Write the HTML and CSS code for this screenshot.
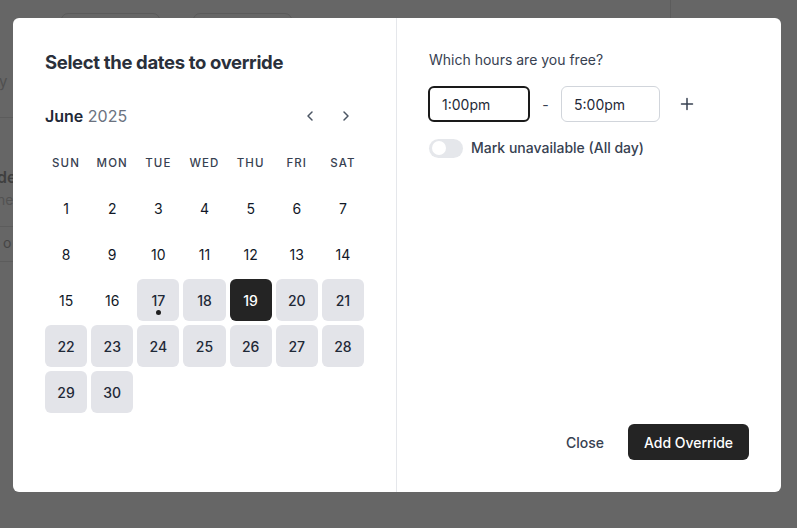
FILE: index.html
```html
<!DOCTYPE html>
<html lang="en">
<head>
<meta charset="utf-8">
<title>Date overrides</title>
<link rel="stylesheet" href="styles.css">
</head>
<body>
<div class="backdrop">
  <div class="bg-box bg-box-a"></div>
  <div class="bg-box bg-box-b"></div>
  <div class="bg-vline"></div>
  <div class="bg-text bg-y">y</div>
  <div class="bg-hline bg-l1"></div>
  <div class="bg-text bg-de">de</div>
  <div class="bg-text bg-ne">ne</div>
  <div class="bg-hline bg-l2"></div>
  <div class="bg-text bg-o">o</div>
  <div class="bg-hline bg-l3"></div>
</div>

<div class="modal">
  <section class="left">
    <h2 class="title">Select the dates to override</h2>
    <div class="month-row">
      <div class="month"><b>June</b> <span class="year">2025</span></div>
      <div class="nav">
        <button class="nav-btn" aria-label="Previous month">
          <svg width="16" height="16" viewBox="0 0 16 16"><path d="M10 4 L6 8 L10 12" fill="none" stroke="#4b5563" stroke-width="1.5" stroke-linecap="round" stroke-linejoin="round"/></svg>
        </button>
        <button class="nav-btn" aria-label="Next month">
          <svg width="16" height="16" viewBox="0 0 16 16"><path d="M6 4 L10 8 L6 12" fill="none" stroke="#4b5563" stroke-width="1.5" stroke-linecap="round" stroke-linejoin="round"/></svg>
        </button>
      </div>
    </div>
    <div class="weekdays">
      <span>SUN</span><span>MON</span><span>TUE</span><span>WED</span><span>THU</span><span>FRI</span><span>SAT</span>
    </div>
    <div class="days">
      <span class="day">1</span><span class="day">2</span><span class="day">3</span><span class="day">4</span><span class="day">5</span><span class="day">6</span><span class="day">7</span>
      <span class="day">8</span><span class="day">9</span><span class="day">10</span><span class="day">11</span><span class="day">12</span><span class="day">13</span><span class="day">14</span>
      <span class="day">15</span><span class="day">16</span><span class="day avail today">17<i class="dot"></i></span><span class="day avail">18</span><span class="day selected">19</span><span class="day avail">20</span><span class="day avail">21</span>
      <span class="day avail">22</span><span class="day avail">23</span><span class="day avail">24</span><span class="day avail">25</span><span class="day avail">26</span><span class="day avail">27</span><span class="day avail">28</span>
      <span class="day avail">29</span><span class="day avail">30</span>
    </div>
  </section>

  <section class="right">
    <div class="question">Which hours are you free?</div>
    <div class="time-row">
      <div class="time-input focused">1:00pm</div>
      <span class="dash">-</span>
      <div class="time-input">5:00pm</div>
      <button class="plus" aria-label="Add time">
        <svg width="14" height="14" viewBox="0 0 14 14"><path d="M7 1.5 V12.5 M1.5 7 H12.5" stroke="#374151" stroke-width="1.5" stroke-linecap="round"/></svg>
      </button>
    </div>
    <div class="toggle-row">
      <span class="toggle"><span class="knob"></span></span>
      <span class="toggle-label">Mark unavailable (All day)</span>
    </div>
    <div class="footer">
      <button class="btn-close">Close</button>
      <button class="btn-primary">Add Override</button>
    </div>
  </section>
</div>
</body>
</html>
```

FILE: styles.css
```css
* { box-sizing: border-box; }
html, body { margin: 0; padding: 0; }
body {
  width: 797px;
  height: 528px;
  overflow: hidden;
  background: #666666;
  font-family: Inter, "Noto Sans", "Liberation Sans", sans-serif;
  color: #111827;
  position: relative;
}
button { font-family: inherit; border: none; background: none; padding: 0; cursor: pointer; }

.backdrop { position: absolute; inset: 0; overflow: hidden; }
.bg-box { position: absolute; top: 13px; width: 99px; height: 30px; border: 1px solid #5a5a5a; border-radius: 7px; }
.bg-box-a { left: 61px; }
.bg-box-b { left: 193px; }
.bg-vline { position: absolute; left: 670px; top: 0; width: 1px; height: 20px; background: #5c5c5c; }
.bg-hline { position: absolute; left: 0; width: 14px; height: 1px; background: #5c5c5c; }
.bg-l1 { top: 117px; }
.bg-l2 { top: 226px; }
.bg-l3 { top: 261px; }
.bg-text { position: absolute; font-size: 16px; color: #4a4a4a; line-height: 20px; }
.bg-y { left: -1px; top: 72px; color: #505050; font-size: 15px; }
.bg-de { left: -3px; top: 167px; font-weight: 600; color: #3f3f3f; }
.bg-ne { left: -3px; top: 190px; font-size: 14px; color: #525252; }
.bg-o { left: 3px; top: 233px; font-size: 14px; color: #454545; }

.modal {
  position: absolute;
  left: 13px;
  top: 18px;
  width: 768px;
  height: 474px;
  background: #ffffff;
  border-radius: 6px;
  display: flex;
}

.left {
  width: 384px;
  padding: 32px 32px 0 32px;
  border-right: 1px solid #e5e7eb;
}
.title {
  margin: 0;
  font-size: 18.5px;
  line-height: 24px;
  font-weight: 700;
  letter-spacing: -0.35px;
  color: #2a303b;
}
.month-row {
  margin-top: 30px;
  width: 319px;
  height: 24px;
  display: flex;
  align-items: center;
  justify-content: space-between;
}
.month { font-size: 16px; line-height: 24px; color: #1f2937; }
.month b { font-weight: 600; }
.year { color: #6b7280; font-weight: 400; }
.nav { display: flex; }
.nav-btn { width: 36px; height: 24px; display: flex; align-items: center; justify-content: center; }

.weekdays {
  margin-top: 27px;
  width: 319px;
  display: grid;
  grid-template-columns: repeat(7, 1fr);
  column-gap: 4px;
  font-size: 11.5px;
  line-height: 16px;
  font-weight: 500;
  letter-spacing: 1.1px;
  color: #374151;
  text-align: center;
}
.days {
  margin-top: 16px;
  width: 319px;
  display: grid;
  grid-template-columns: repeat(7, 1fr);
  grid-auto-rows: 42px;
  gap: 4px;
}
.day {
  position: relative;
  display: flex;
  align-items: center;
  justify-content: center;
  font-size: 14px;
  color: #111827;
  border-radius: 6px;
}
.day.avail { background: #e3e4e9; font-weight: 500; color: #1f2937; }
.day.selected { background: #242424; color: #ffffff; font-weight: 500; }
.dot {
  position: absolute;
  left: 50%;
  bottom: 6px;
  width: 5px;
  height: 5px;
  margin-left: -2.5px;
  border-radius: 50%;
  background: #1f1f1f;
}

.right {
  flex: 1;
  padding: 32px 32px 32px 32px;
  display: flex;
  flex-direction: column;
}
.question { font-size: 14px; line-height: 20px; color: #374151; }
.time-row {
  margin-top: 16px;
  display: flex;
  align-items: center;
  gap: 12px;
}
.time-input {
  width: 99px;
  height: 36px;
  padding: 0 12px;
  display: flex;
  align-items: center;
  border: 1px solid #d1d5db;
  border-radius: 6px;
  font-size: 14px;
  color: #1f2937;
}
.time-input.focused { width: 102px; margin-left: -1px; border: 2px solid #1a1a1a; padding-left: 12px; }
.dash { font-size: 14px; color: #374151; width: 7px; text-align: center; }
.plus { width: 30px; height: 36px; display: flex; align-items: center; justify-content: center; }

.toggle-row {
  margin-top: 16px;
  display: flex;
  align-items: center;
  gap: 8px;
}
.toggle {
  width: 34px;
  height: 19px;
  border-radius: 10px;
  background: #e5e7eb;
  position: relative;
  display: inline-block;
}
.knob {
  position: absolute;
  left: 3px;
  top: 2.5px;
  width: 14px;
  height: 14px;
  border-radius: 50%;
  background: #ffffff;
}
.toggle-label { font-size: 14px; line-height: 20px; font-weight: 500; color: #374151; }

.footer {
  margin-top: auto;
  display: flex;
  justify-content: flex-end;
  align-items: center;
  gap: 8px;
}
.btn-close {
  height: 36px;
  padding: 0 16px;
  font-size: 14px;
  font-weight: 500;
  color: #374151;
  border-radius: 6px;
}
.btn-primary {
  height: 36px;
  width: 121px;
  font-size: 14px;
  font-weight: 500;
  color: #ffffff;
  background: #242424;
  border-radius: 6px;
}
```
